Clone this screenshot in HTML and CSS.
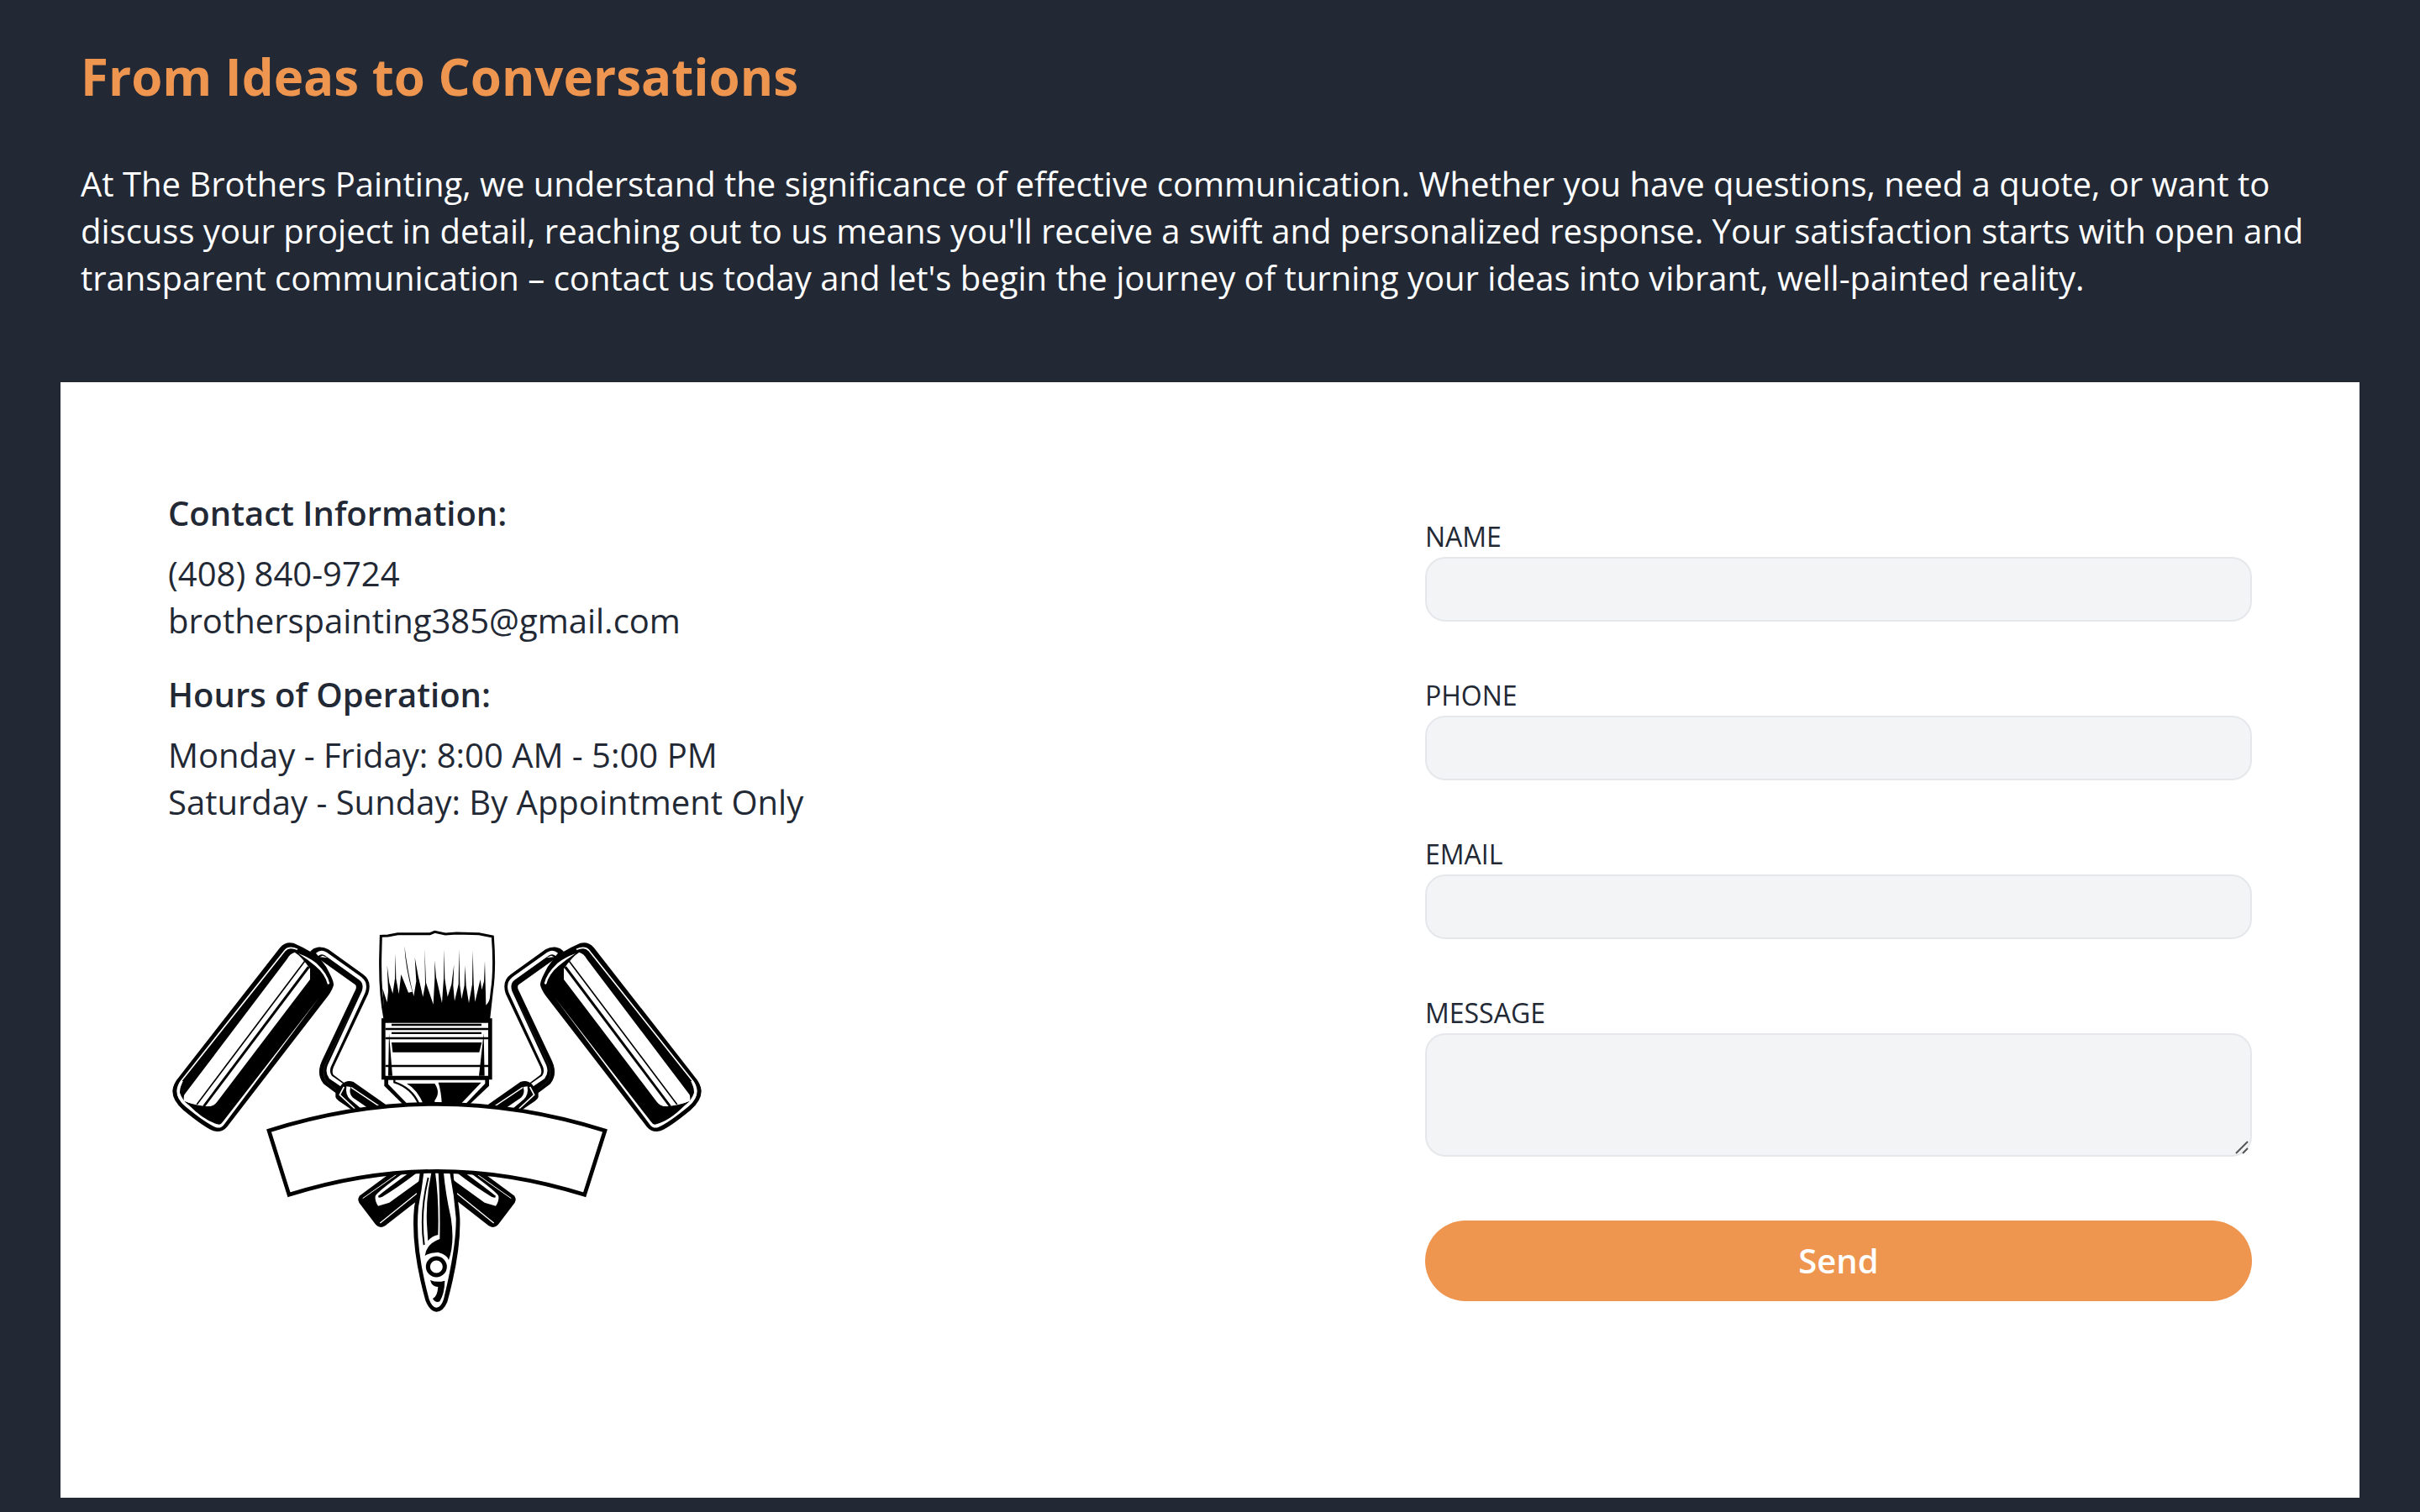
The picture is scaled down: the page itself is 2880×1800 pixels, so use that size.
FILE: index.html
```html
<!DOCTYPE html>
<html lang="en">
<head>
<meta charset="utf-8">
<meta name="viewport" content="width=device-width, initial-scale=1">
<title>Contact | The Brothers Painting</title>
<link rel="stylesheet" href="styles.css">
</head>
<body>
<main class="contact">
  <header class="intro">
    <h1 class="intro-title">From Ideas to Conversations</h1>
    <p class="intro-text">At The Brothers Painting, we understand the significance of effective communication. Whether you have questions, need a quote, or want to discuss your project in detail, reaching out to us means you'll receive a swift and personalized response. Your satisfaction starts with open and transparent communication – contact us today and let's begin the journey of turning your ideas into vibrant, well-painted reality.</p>
  </header>

  <section class="card">
    <div class="details">
      <h2 class="details-title">Contact Information:</h2>
      <p class="details-text">(408) 840-9724<br>brotherspainting385@gmail.com</p>
      <h2 class="details-title">Hours of Operation:</h2>
      <p class="details-text">Monday - Friday: 8:00 AM - 5:00 PM<br>Saturday - Sunday: By Appointment Only</p>

      <svg class="logo" viewBox="30 -225 1920 1920" role="img" aria-label="Crossed paint rollers and a brush behind a banner">
        <defs>
          <g id="roller">
            <!-- wire arm -->
            <path d="M553 146Q568 128 592 142L712 228Q732 242 722 272L600 530Q586 562 602 584L655 624" fill="none" stroke="#000" stroke-width="47" stroke-linejoin="round"/>
            <path d="M562 139Q576 127 592 136L718 226Q738 242 728 272L607 534Q596 558 610 577L652 606" fill="none" stroke="#fff" stroke-width="13"/>
            <path d="M572 148L600 151L582 143Z" fill="#fff"/>
            <path d="M690 330L590 535Q580 562 592 588L630 622" fill="none" stroke="#555" stroke-width="1"/>
            <!-- upper grip -->
            <path d="M628 648V634L650 603Q668 585 692 594L815 680L800 700H695L640 662Q630 656 628 648Z"/>
            <path d="M658 612L643 640L697 690" fill="none" stroke="#fff" stroke-width="5"/>
            <path d="M667 610L682 612Q674 636 690 650L748 690H720L680 656Q662 640 667 610Z" fill="#fff"/>
            <path d="M684 614L786 682" fill="none" stroke="#fff" stroke-width="4"/>
            <!-- lower grip -->
            <path d="M850 900L715 1000Q704 1012 712 1025L770 1102Q785 1120 805 1108L930 1010V900Z"/>
            <path d="M770 1002Q775 988 868 921H935V942L820 1025L780 1037Q768 1020 770 1002Z" fill="#fff"/>
            <path d="M888 920L922 916Q850 972 795 1004Q776 1012 782 1000Q800 984 888 920Z"/>
            <path d="M725 1010L850 922" fill="none" stroke="#fff" stroke-width="3"/>
            <path d="M787 1098L918 992" fill="none" stroke="#fff" stroke-width="4"/>
            <!-- sleeve -->
            <path d="M430 114Q448 92 478 98Q512 112 545 133Q585 158 606 205Q622 236 621 248Q618 262 602 286L240 755Q222 776 192 769Q158 755 85 695Q45 660 46 625Q48 600 70 575Z"/>
            <path d="M492 121Q462 108 448 124L76 592" fill="none" stroke="#fff" stroke-width="5"/>
            <path d="M74 590L84 591Q72 612 72 632Q80 658 104 676Q160 735 212 746Q220 746 226 736L570 292L230 746Q218 762 200 756Q165 742 92 682Q60 655 61 625Q63 605 74 590Z" fill="#fff"/>
            <path d="M84 590L76 625L86 652L98 640L100 580Z"/>
            <path d="M482 131Q506 145 537 190V228L205 665Q190 685 165 682Q115 675 88 663Q84 655 88 640L455 155Q465 136 482 131Z" fill="#fff"/>
            <path d="M518 163L133 674M530 182L156 680" fill="none" stroke="#000" stroke-width="5"/>
            <path d="M533 184L158 682" fill="none" stroke="#000" stroke-width="7"/>
            <path d="M88 663Q150 690 196 678L170 705L120 690Z"/>
            <path d="M495 135Q535 150 560 170Q600 208 607 243L600 246Q590 208 556 180Q530 158 495 135Z" fill="#fff"/>
          </g>
        </defs>

        <use href="#roller"/>
        <use href="#roller" transform="matrix(-1 0 0 1 1980 0)"/>

        <!-- brush head -->
        <g transform="translate(720 0)">
          <path d="M84 370Q66 280 68 150L70 73L95 72L130 65L245 65L262 58L300 66L340 63L420 65L469 75Q478 190 466 270L455 370" fill="#fff" stroke="#000" stroke-width="9"/>
          <path d="M83 370L76 260L92 310L96 270L92 178L100 240L112 278L120 225L122 135L124 225L134 280L142 210L158 250L168 275L182 272Q158 190 154 108Q165 200 187 288L196 235L191 150L203 215L220 290L228 245L226 118L231 240L257 317L262 225V160L267 220L288 312L294 225L296 120L298 225L308 290L322 245L331 175L328 250L333 305L347 245L349 120L352 250L358 298L368 250L370 178L374 250L384 312L396 245L398 125L401 245L406 308L425 228L430 265L438 235L441 162L445 320Q458 310 466 270L456 370Z"/>
          <path d="M72 367H467V586H72Z"/>
          <path d="M86 383H453V572H86Z" fill="#fff"/>
          <path d="M86 401H453V409H86ZM86 434H453V442H86ZM86 533H453V541H86ZM108 386H429V394H108ZM108 416H429V423H108ZM108 453H430L421 488H112ZM99 420L111 572H96ZM437 420L440 572H420Z"/>
          <path d="M82 584H456V608L380 680H155L82 608Z"/>
          <path d="M96 587H442V600L365 680H172L96 602Z" fill="#fff"/>
          <path d="M162 600H262Q284 632 262 660V680H225Q200 620 162 600ZM275 596H428L348 680H288Q285 625 275 596Z"/>
          <path d="M118 586V595Q180 615 205 672" fill="none" stroke="#000" stroke-width="7"/>
        </g>

        <!-- brush handle -->
        <g transform="translate(330 540)">
          <path d="M600 370Q594 430 579 500Q565 640 619 835Q635 875 658 875Q682 875 697 840Q746 660 742 540Q738 480 720 400L718 370Z"/>
          <path d="M613 378Q606 440 594 500Q580 640 632 830Q642 858 658 860Q675 858 684 830Q730 640 728 540Q722 460 706 378Z" fill="#fff"/>
          <path d="M640 378Q620 470 624 560L628 622Q642 604 664 600Q668 480 654 378Z"/>
          <path d="M665 378H684Q690 450 710 540Q724 630 702 690Q695 670 665 663Q635 662 617 675Q622 632 670 615Q672 480 665 378Z"/>
          <path d="M629 396Q598 520 614 636" fill="none" stroke="#000" stroke-width="6"/>
          <circle cx="658" cy="714" r="30" fill="#fff" stroke="#000" stroke-width="15"/>
          <path d="M636 762Q660 772 688 764Q687 810 670 838Q655 845 645 828Q662 820 664 786Q642 786 636 762Z"/>
        </g>

        <!-- banner -->
        <path d="M390 768Q690 673 990 673Q1290 673 1590 768L1517 997Q1250 913 990 913Q730 913 462 997Z" fill="#fff" stroke="#000" stroke-width="14"/>
      </svg>
    </div>

    <form class="form">
      <div class="field">
        <label class="label" for="name">Name</label>
        <input class="control" id="name" name="name" type="text">
      </div>
      <div class="field">
        <label class="label" for="phone">Phone</label>
        <input class="control" id="phone" name="phone" type="tel">
      </div>
      <div class="field">
        <label class="label" for="email">Email</label>
        <input class="control" id="email" name="email" type="email">
      </div>
      <div class="field">
        <label class="label" for="message">Message</label>
        <div class="area">
          <textarea class="control control-area" id="message" name="message"></textarea>
          <svg class="grip" viewBox="0 0 16 16" aria-hidden="true"><path d="M1 15L15 1M9 15L15 9"/></svg>
        </div>
      </div>
      <button class="send" type="submit">Send</button>
    </form>
  </section>
</main>
</body>
</html>
```
FILE: styles.css
```css
*,
*::before,
*::after {
  box-sizing: border-box;
}

body {
  margin: 0;
  background: #222935;
  color: #222935;
  font-family: "Open Sans", "Noto Sans", sans-serif;
  font-size: 40px;
  line-height: 56px;
}

h1,
h2,
p {
  margin: 0;
}

.contact {
  padding: 55px 72px 17px;
}

.intro {
  padding: 0 24px 96px;
}

.intro-title {
  margin-bottom: 64px;
  color: #ee9550;
  font-size: 60px;
  font-weight: 700;
  line-height: 72px;
}

.intro-text {
  color: #fff;
}

.card {
  display: grid;
  grid-template-columns: 3fr 2fr;
  gap: 20px;
  padding: 128px;
  background: #fff;
}

.details-title {
  margin-bottom: 16px;
  font-size: 40px;
  font-weight: 600;
}

.details-text {
  margin-bottom: 32px;
}

.logo {
  display: block;
  width: 640px;
  max-width: 100%;
}

.form {
  padding-top: 32px;
}

.field {
  display: flex;
  flex-direction: column;
  margin-bottom: 64px;
}

.label {
  font-size: 32px;
  line-height: 48px;
  text-transform: uppercase;
}

.control {
  width: 100%;
  height: 77px;
  padding: 12px 24px;
  border: 2px solid #e5e7eb;
  border-radius: 24px;
  background: #f3f4f6;
  color: inherit;
  font: inherit;
  font-size: 32px;
}

.area {
  position: relative;
  margin-bottom: 12px;
}

.control-area {
  display: block;
  height: 147px;
  resize: vertical;
}

.control-area::-webkit-resizer {
  background: transparent;
}

.grip {
  position: absolute;
  right: 4px;
  bottom: 3px;
  width: 16px;
  height: 16px;
  fill: none;
  stroke: #555;
  stroke-width: 2;
  pointer-events: none;
}

.send {
  display: block;
  width: 100%;
  padding: 20px;
  border: 0;
  border-radius: 48px;
  background: #ee9550;
  color: #fff;
  font: inherit;
  font-weight: 600;
}
```
